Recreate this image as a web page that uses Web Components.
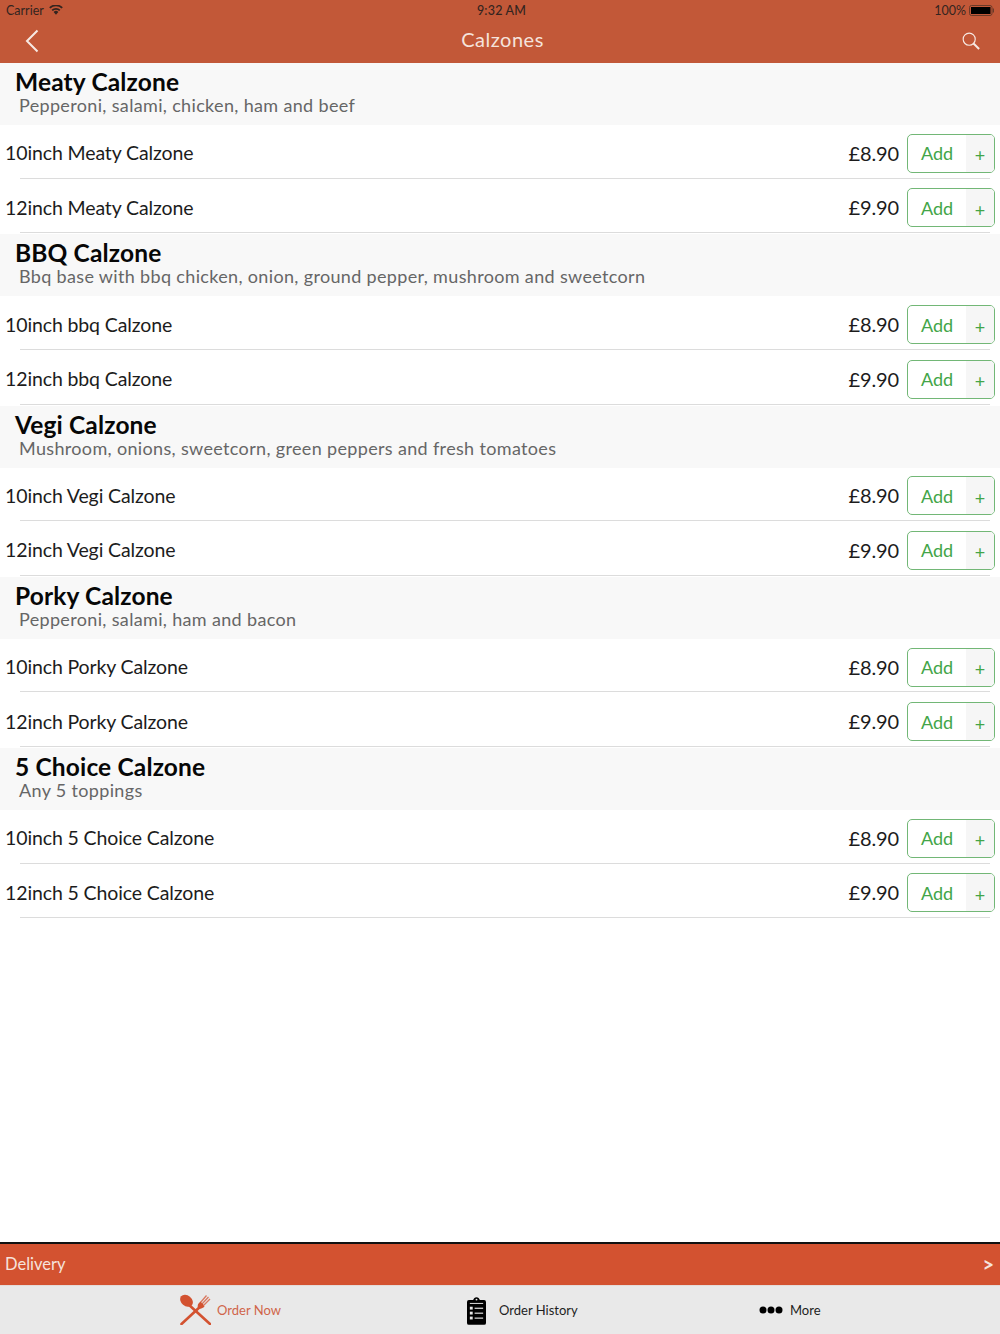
<!DOCTYPE html>
<html>
<head>
<meta charset="utf-8">
<style>
  html, body { margin: 0; padding: 0; background: #fff; }
  body { font-family: "Lato", "Liberation Sans", sans-serif; height: 1334px; overflow: hidden; }
  menu-app { height: 1334px; }
</style>
</head>
<body>
<menu-app>
  <app-header slot="header" title="Calzones"></app-header>
  <menu-section name="Meaty Calzone" desc="Pepperoni, salami, chicken, ham and beef">
    <menu-row name="10inch Meaty Calzone" price="£8.90"></menu-row>
    <menu-row name="12inch Meaty Calzone" price="£9.90"></menu-row>
  </menu-section>
  <menu-section name="BBQ Calzone" desc="Bbq base with bbq chicken, onion, ground pepper, mushroom and sweetcorn">
    <menu-row name="10inch bbq Calzone" price="£8.90"></menu-row>
    <menu-row name="12inch bbq Calzone" price="£9.90"></menu-row>
  </menu-section>
  <menu-section name="Vegi Calzone" desc="Mushroom, onions, sweetcorn, green peppers and fresh tomatoes">
    <menu-row name="10inch Vegi Calzone" price="£8.90"></menu-row>
    <menu-row name="12inch Vegi Calzone" price="£9.90"></menu-row>
  </menu-section>
  <menu-section name="Porky Calzone" desc="Pepperoni, salami, ham and bacon">
    <menu-row name="10inch Porky Calzone" price="£8.90"></menu-row>
    <menu-row name="12inch Porky Calzone" price="£9.90"></menu-row>
  </menu-section>
  <menu-section name="5 Choice Calzone" desc="Any 5 toppings">
    <menu-row name="10inch 5 Choice Calzone" price="£8.90"></menu-row>
    <menu-row name="12inch 5 Choice Calzone" price="£9.90"></menu-row>
  </menu-section>
  <delivery-bar slot="footer"></delivery-bar>
  <tab-bar slot="footer"></tab-bar>
</menu-app>

<script>
class MenuApp extends HTMLElement {
  constructor() {
    super();
    this.attachShadow({ mode: 'open' });
    this.shadowRoot.innerHTML = `
      <style>
        :host { display: flex; flex-direction: column; }
        .list { flex: 1; min-height: 0; }
      </style>
      <slot name="header"></slot>
      <div class="list"><slot></slot></div>
      <slot name="footer"></slot>
    `;
  }
}

class AppHeader extends HTMLElement {
  constructor() {
    super();
    this.attachShadow({ mode: 'open' });
    this.shadowRoot.innerHTML = `
      <style>
        :host { display: block; height: 63px; background: #c25838; color: #fff; }
        .status { height: 20px; display: grid; grid-template-columns: 1fr auto 1fr; align-items: center; padding: 0 6px; font-size: 12.5px; color: #33241f; }
        .status .left { display: flex; align-items: center; gap: 5px; }
        .status .right { display: flex; align-items: center; justify-content: flex-end; gap: 3px; }
        .time { font-weight: 500; font-size: 12.5px; letter-spacing: .2px; margin-left: 3px; }
        .nav { height: 43px; display: flex; align-items: center; justify-content: space-between; padding: 0 20px 6px 25px; box-sizing: border-box; }
        .nav svg { margin-top: 4px; }
        .title { font-size: 20px; letter-spacing: .5px; color: #f5e3dc; padding-left: 4px; }
        svg { display: block; }
      </style>
      <div class="status">
        <div class="left">Carrier
          <svg width="14" height="10" viewBox="0 0 14 10"><path d="M7 9.800 4.600 7a3.300 3.300 0 0 1 4.800 0z" fill="#33241f"/><path d="M3.200 5.400a5.400 5.400 0 0 1 7.600 0M.8 2.900a8.800 8.800 0 0 1 12.400 0" fill="none" stroke="#33241f" stroke-width="1.800"/></svg>
        </div>
        <div class="time">9:32 AM</div>
        <div class="right">100%
          <svg width="25" height="11" viewBox="0 0 25 11"><rect x=".5" y=".5" width="22.500" height="10" rx="2" fill="none" stroke="#6b3a28"/><rect x="2" y="2" width="19.500" height="7" fill="#000"/><rect x="23.800" y="3.500" width="1.200" height="4" fill="#6b3a28"/></svg>
        </div>
      </div>
      <div class="nav">
        <svg width="14" height="24" viewBox="0 0 14 24"><path d="M12.500 1.500 2 12l10.500 10.500" fill="none" stroke="#f7e9e3" stroke-width="2"/></svg>
        <div class="title">${this.getAttribute('title')}</div>
        <svg width="18" height="18" viewBox="0 0 20 20"><circle cx="8" cy="8" r="6.700" fill="none" stroke="#f7e9e3" stroke-width="1.300"/><path d="M12.800 12.800 19 18.800" stroke="#f7e9e3" stroke-width="2.200"/></svg>
      </div>
    `;
  }
}

class MenuSection extends HTMLElement {
  constructor() {
    super();
    this.attachShadow({ mode: 'open' });
    this.shadowRoot.innerHTML = `
      <style>
        :host { display: block; }
        .head { height: 62px; box-sizing: border-box; background: #f8f8f8; padding: 6px 15px 0; }
        .name { font-size: 24.5px; line-height: 26px; font-weight: 700; color: #070707; letter-spacing: .15px; }
        .desc { font-size: 18px; line-height: 20px; color: #666; padding-left: 4px; letter-spacing: .34px; }
      </style>
      <div class="head">
        <div class="name">${this.getAttribute('name')}</div>
        <div class="desc">${this.getAttribute('desc')}</div>
      </div>
      <slot></slot>
    `;
  }
}

class MenuRow extends HTMLElement {
  constructor() {
    super();
    this.attachShadow({ mode: 'open' });
    this.shadowRoot.innerHTML = `
      <style>
        :host { display: block; }
        .row { height: 54.625px; box-sizing: border-box; display: flex; align-items: center; padding: 0 5px; position: relative; }
        .row::after { content: ""; position: absolute; left: 20px; right: 10px; bottom: 1px; height: 1px; background: #dcdcdc; }
        .name { flex: 1; font-size: 19.5px; color: #1c1c1c; letter-spacing: -.12px; margin-top: 1px; }
        .price { font-size: 20px; color: #1c1c1c; margin: 1px 8px 0 0; letter-spacing: -.1px; }
        .btn { width: 88px; height: 39px; box-sizing: border-box; border: 1.5px solid #72b776; border-radius: 5px; display: flex; overflow: hidden; background: #fff; position: relative; z-index: 1; color: #43a548; margin-top: 2px; }
        .add { flex: 1; font-size: 18px; display: flex; align-items: center; justify-content: center; }
        .plus { width: 28px; background: #f6f6f6; font-size: 18px; display: flex; align-items: center; justify-content: center; padding-top: 4px; box-sizing: border-box; }
      </style>
      <div class="row">
        <div class="name">${this.getAttribute('name')}</div>
        <div class="price">${this.getAttribute('price')}</div>
        <div class="btn"><div class="add">Add</div><div class="plus">+</div></div>
      </div>
    `;
  }
}

class DeliveryBar extends HTMLElement {
  constructor() {
    super();
    this.attachShadow({ mode: 'open' });
    this.shadowRoot.innerHTML = `
      <style>
        :host { display: flex; height: 43px; box-sizing: border-box; border-top: 2px solid #111; background: #d35230; color: #f6e3dc; align-items: center; justify-content: space-between; padding: 0 6px 2px 5px; font-size: 16.5px; }
        .go { font-size: 20px; font-weight: 700; }
      </style>
      <span>Delivery</span><span class="go">&gt;</span>
    `;
  }
}

class TabBar extends HTMLElement {
  constructor() {
    super();
    this.attachShadow({ mode: 'open' });
    this.shadowRoot.innerHTML = `
      <style>
        :host { display: block; height: 49px; background: #e9e9e9; box-shadow: inset 0 1px 0 #e4dcd9; font-size: 13px; color: #1e1e1e; }
        .tabs { display: grid; grid-template-columns: 180px 287px 292px auto; height: 100%; }
        .tab { display: flex; align-items: center; }
        .now { color: #d0654a; gap: 6px; }
        .hist { gap: 13px; }
        .hist svg { margin-top: 3px; }
        .more { gap: 7px; }
        svg { display: block; }
      </style>
      <div class="tabs">
        <div></div>
        <div class="tab now">
          <svg width="31" height="31" viewBox="0 0 31 31" fill="none" stroke="#d35230">
            <ellipse cx="6.500" cy="6.800" rx="7" ry="5.300" transform="rotate(40 6.500 6.800)" fill="#d35230" stroke="none"/>
            <path d="M8 10 30 30" stroke-width="2.600" stroke-linecap="round"/>
            <path d="M1.500 30 22 11" stroke-width="2.600" stroke-linecap="round"/>
            <path d="M18 14c-1-2.500 0-4.500 2.500-6.500l4 5c-2 2-4.500 3-6.500 1.500z" fill="#d35230" stroke="none"/>
            <path d="M20.500 8.500 26.500 1.500M22 10 28.500 3M23.500 11.500 30 5" stroke-width="1.300" opacity=".75"/>
          </svg>
          <span>Order Now</span>
        </div>
        <div class="tab hist">
          <svg width="19" height="28" viewBox="0 0 20 29">
            <path fill="#000" d="M2 3h4.500C7 1.200 8.300 0 10 0s3 1.200 3.500 3H18a2 2 0 0 1 2 2v22a2 2 0 0 1-2 2H2a2 2 0 0 1-2-2V5a2 2 0 0 1 2-2z"/>
            <g fill="#e9e9e9"><rect x="9" y="1.500" width="2" height="2" rx="1"/><rect x="3" y="6" width="14" height="1"/><rect x="3" y="10" width="3" height="3"/><rect x="3" y="15.200" width="3" height="3"/><rect x="3" y="20.400" width="3" height="3"/><rect x="8" y="11" width="9" height="1.200"/><rect x="8" y="16.200" width="9" height="1.200"/><rect x="8" y="21.400" width="9" height="1.200"/></g>
          </svg>
          <span>Order History</span>
        </div>
        <div class="tab more">
          <svg width="24" height="8" viewBox="0 0 24 8" fill="#000"><circle cx="4" cy="4" r="3.500"/><circle cx="12" cy="4" r="3.500"/><circle cx="20" cy="4" r="3.500"/></svg>
          <span>More</span>
        </div>
      </div>
    `;
  }
}

customElements.define('menu-app', MenuApp);
customElements.define('app-header', AppHeader);
customElements.define('menu-section', MenuSection);
customElements.define('menu-row', MenuRow);
customElements.define('delivery-bar', DeliveryBar);
customElements.define('tab-bar', TabBar);
</script>
</body>
</html>
